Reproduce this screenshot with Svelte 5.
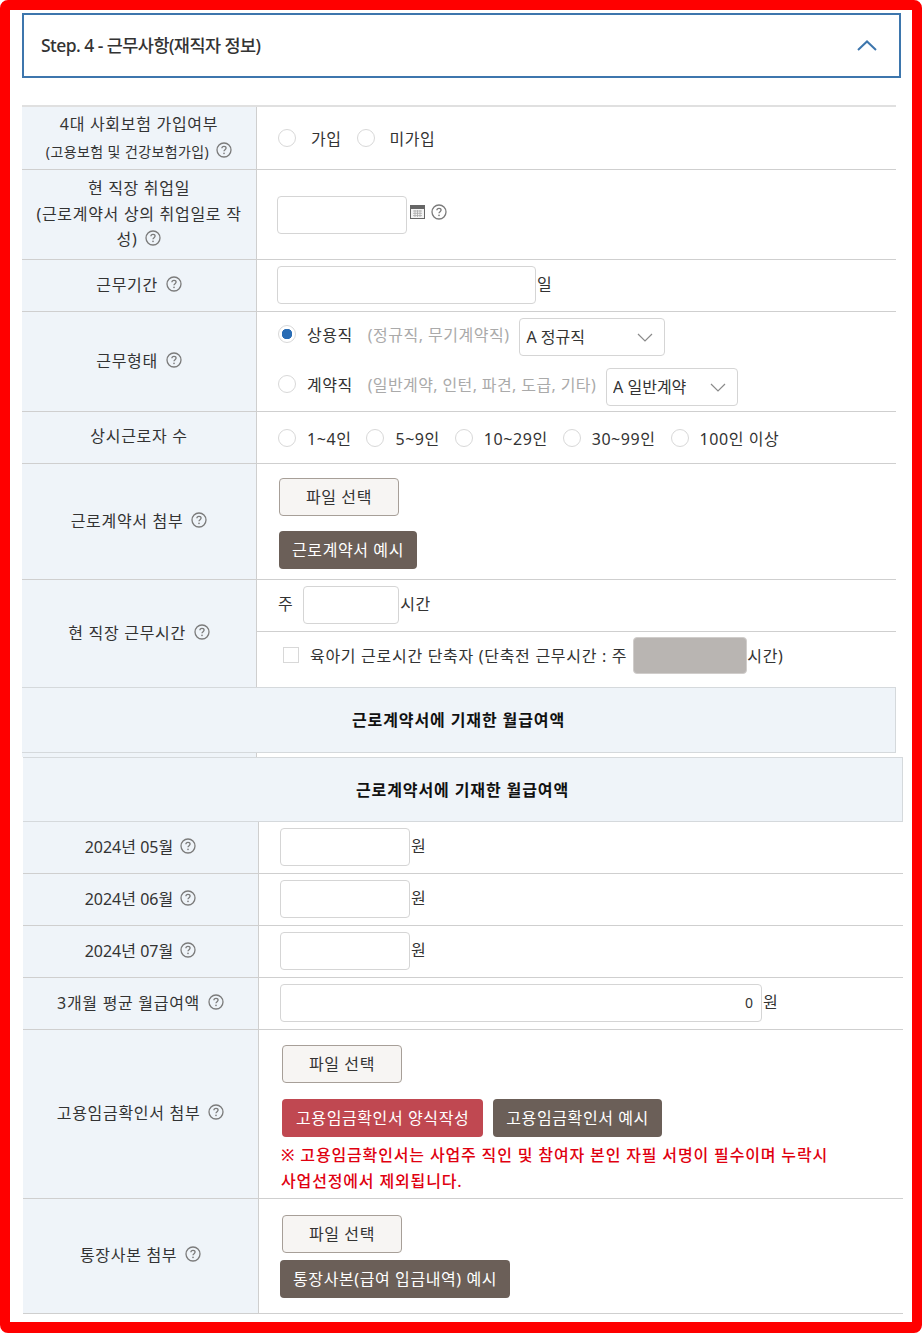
<script>
  const months = ['2024년 05월', '2024년 06월', '2024년 07월'];
  const sizes = ['1~4인', '5~9인', '10~29인', '30~99인', '100인 이상'];
</script>

{#snippet help()}
  <svg class="help" viewBox="0 0 16 16" aria-hidden="true">
    <circle cx="8" cy="8" r="7" fill="none" stroke="#7b7b7b" stroke-width="1.3" />
    <path d="M5.9 6.2c0-1.2 1-1.9 2.1-1.9s2.1.7 2.1 1.8c0 1.5-2.1 1.6-2.1 3.2" fill="none" stroke="#7b7b7b" stroke-width="1.3" />
    <circle cx="8" cy="11.4" r=".8" fill="#7b7b7b" />
  </svg>
{/snippet}

{#snippet chevron()}
  <svg class="select-arrow" viewBox="0 0 16 9" aria-hidden="true">
    <path d="M1 1l7 7 7-7" fill="none" stroke="#8a8a8a" stroke-width="1.2" />
  </svg>
{/snippet}

<div class="frame">
  <div class="step-header">
    <span>Step. 4 - 근무사항(재직자 정보)</span>
    <svg class="collapse" viewBox="0 0 20 11" aria-hidden="true">
      <path d="M1 10l9-8.5 9 8.5" fill="none" stroke="#3d76ad" stroke-width="2" />
    </svg>
  </div>

  <table class="form first">
    <colgroup><col class="col-head" /><col /></colgroup>
    <tbody>
      <tr class="h63">
        <th>
          <div>4대 사회보험 가입여부</div>
          <div class="sub">(고용보험 및 건강보험가입) {@render help()}</div>
        </th>
        <td>
          <div class="radios wide">
            <label><input type="radio" name="ins" /><span>가입</span></label>
            <label><input type="radio" name="ins" /><span>미가입</span></label>
          </div>
        </td>
      </tr>
      <tr class="h90">
        <th>현 직장 취업일<br />(근로계약서 상의 취업일로 작성) {@render help()}</th>
        <td>
          <div class="line top">
            <input class="text w130" type="text" />
            <svg class="calendar" viewBox="0 0 15 15" aria-hidden="true">
              <rect x=".5" y="1.5" width="14" height="13" fill="#f4f4f4" stroke="#666" />
              <rect x=".5" y="1.5" width="14" height="3.5" fill="#666" />
              <path d="M3 7h9M3 9.3h9M3 11.6h9M5 6v7M7.5 6v7M10 6v7" stroke="#aaa" stroke-width=".8" />
            </svg>
            {@render help()}
          </div>
        </td>
      </tr>
      <tr class="h52">
        <th>근무기간 {@render help()}</th>
        <td><div class="line lift"><input class="text w259" type="text" /><span class="unit">일</span></div></td>
      </tr>
      <tr class="h100">
        <th>근무형태 {@render help()}</th>
        <td>
          <div class="employ">
            <div class="employ-row">
              <label class="choice"><input type="radio" name="kind" checked /><span>상용직</span></label>
              <span class="hint">(정규직, 무기계약직)</span>
              <div class="select s146"><select><option>A 정규직</option></select>{@render chevron()}</div>
            </div>
            <div class="employ-row">
              <label class="choice"><input type="radio" name="kind" /><span>계약직</span></label>
              <span class="hint long">(일반계약, 인턴, 파견, 도급, 기타)</span>
              <div class="select s132"><select><option>A 일반계약</option></select>{@render chevron()}</div>
            </div>
          </div>
        </td>
      </tr>
      <tr class="h52">
        <th class="up">상시근로자 수</th>
        <td>
          <div class="radios">
            {#each sizes as size}
              <label><input type="radio" name="size" /><span>{size}</span></label>
            {/each}
          </div>
        </td>
      </tr>
      <tr class="h116">
        <th>근로계약서 첨부 {@render help()}</th>
        <td>
          <div class="stack contract">
            <button class="file w120">파일 선택</button>
            <button class="dark">근로계약서 예시</button>
          </div>
        </td>
      </tr>
      <tr class="h52">
        <th rowspan="2" class="last">현 직장 근무시간 {@render help()}</th>
        <td>
          <div class="line week lift"><span class="ju">주</span><input class="text w96" type="text" /><span class="unit">시간</span></div>
        </td>
      </tr>
      <tr class="h55">
        <td class="last">
          <div class="line shorten">
            <input class="check" type="checkbox" />
            <span class="check-label">육아기 근로시간 단축자 (단축전 근무시간 : 주</span>
            <input class="text disabled" type="text" disabled />
            <span>시간)</span>
          </div>
        </td>
      </tr>
      <tr class="h66">
        <td class="band" colspan="2">근로계약서에 기재한 월급여액</td>
      </tr>
      <tr class="sliver"><th></th><td></td></tr>
    </tbody>
  </table>

  <table class="form second">
    <colgroup><col class="col-head2" /><col /></colgroup>
    <tbody>
      <tr class="h65">
        <td class="band" colspan="2">근로계약서에 기재한 월급여액</td>
      </tr>
      {#each months as month}
        <tr class="h52">
          <th class="tight">{month} {@render help()}</th>
          <td><div class="line lift"><input class="text w130" type="text" /><span class="unit">원</span></div></td>
        </tr>
      {/each}
      <tr class="h52">
        <th>3개월 평균 월급여액 {@render help()}</th>
        <td><div class="line lift"><input class="text w482 number" type="text" value="0" /><span class="unit">원</span></div></td>
      </tr>
      <tr class="h169">
        <th>고용임금확인서 첨부 {@render help()}</th>
        <td>
          <div class="stack wage">
            <button class="file w120">파일 선택</button>
            <div class="btn-row">
              <button class="red">고용임금확인서 양식작성</button>
              <button class="dark">고용임금확인서 예시</button>
            </div>
            <p class="notice">※ 고용임금확인서는 사업주 직인 및 참여자 본인 자필 서명이 필수이며 누락시<br />사업선정에서 제외됩니다.</p>
          </div>
        </td>
      </tr>
      <tr class="h115">
        <th>통장사본 첨부 {@render help()}</th>
        <td>
          <div class="stack bank">
            <button class="file w120">파일 선택</button>
            <button class="dark">통장사본(급여 입금내역) 예시</button>
          </div>
        </td>
      </tr>
    </tbody>
  </table>
</div>

<style>
  :global(body) {
    margin: 0;
    background: #fff;
  }

  .frame {
    box-sizing: border-box;
    width: 922px;
    height: 1333px;
    border: 10px solid #ff0000;
    border-bottom-width: 11px;
    border-radius: 8px;
    padding-top: 3px;
    overflow: hidden;
    font-family: "Noto Sans", "Noto Sans CJK KR", sans-serif;
    font-size: 16px;
    letter-spacing: 0.5px;
    color: #333;
  }

  .step-header {
    box-sizing: border-box;
    display: flex;
    align-items: center;
    justify-content: space-between;
    width: 879px;
    height: 65px;
    margin-left: 12px;
    padding: 0 22px 3px 17px;
    border: 2px solid #3d76ad;
    font-size: 17.5px;
    font-weight: 500;
    letter-spacing: -0.55px;
    color: #333;
  }

  .collapse {
    width: 20px;
    height: 11px;
    margin-top: 3px;
  }

  .form {
    table-layout: fixed;
    border-collapse: separate;
    border-spacing: 0;
  }

  .first {
    width: 874px;
    margin: 27px 0 0 12px;
    border-top: 2px solid #e0e0e0;
  }

  .second {
    width: 880px;
    margin-left: 13px;
  }

  .col-head {
    width: 235px;
  }

  .col-head2 {
    width: 236px;
  }

  th, td {
    box-sizing: border-box;
    padding: 0;
    border-bottom: 1px solid #cfcfcf;
    vertical-align: middle;
  }

  th {
    padding: 0 10px;
    background: #eff4f9;
    border-right: 1px solid #cfcfcf;
    font-weight: 400;
    text-align: center;
    line-height: 25.5px;
    letter-spacing: 0.7px;
    color: #333;
  }

  th.tight {
    letter-spacing: 0;
  }

  td {
    padding-left: 20px;
  }

  .second td {
    padding-left: 21px;
  }

  th.last, td.last {
    border-bottom: 0;
  }

  th.up {
    padding-bottom: 1px;
  }

  .h52 { height: 52px; }
  .h55 { height: 55px; }
  .h63 { height: 63px; }
  .h65 { height: 65px; }
  .h66 { height: 66px; }
  .h90 { height: 90px; }
  .h100 { height: 100px; }
  .h115 { height: 115px; }
  .h116 { height: 116px; }
  .h169 { height: 169px; }

  .sliver {
    height: 4px;
  }

  .sliver th, .sliver td {
    padding: 0;
    border-bottom: 0;
    line-height: 0;
  }

  .sub {
    margin-top: 2px;
    font-size: 14px;
    letter-spacing: 0.4px;
  }

  td.band {
    padding: 0 0 2px;
    background: #eff4f9;
    border: 1px solid #d5d9dc;
    border-left: 0;
    text-align: center;
    font-weight: 700;
    letter-spacing: 0.9px;
    color: #111;
  }

  .help {
    width: 16px;
    height: 16px;
    margin-left: 3px;
    vertical-align: -1px;
  }

  .line {
    display: flex;
    align-items: center;
  }

  .line.lift {
    margin-bottom: 2px;
  }

  .line.top {
    align-items: flex-start;
  }

  .text {
    box-sizing: border-box;
    height: 38px;
    padding: 0 8px;
    border: 1px solid #d5d5d5;
    border-radius: 4px;
    background: #fff;
    font: inherit;
    font-size: 14px;
    color: #333;
  }

  .w96 { width: 96px; }
  .w130 { width: 130px; }
  .w259 { width: 259px; }
  .w482 { width: 482px; }

  .number {
    text-align: right;
  }

  .unit {
    margin: 0 0 4px 1px;
  }

  .calendar {
    width: 15px;
    height: 15px;
    margin: 8px 3px 0 3px;
  }

  .line.top .help {
    margin-top: 8px;
  }

  .radios {
    display: flex;
    gap: 15px;
    padding-left: 1px;
    letter-spacing: 0.56px;
  }

  .radios.wide span {
    margin-left: 15px;
  }

  .radios label, .choice {
    display: flex;
    align-items: center;
  }

  .radios span, .choice span {
    margin-left: 11px;
  }

  input[type="radio"] {
    appearance: none;
    box-sizing: border-box;
    width: 18px;
    height: 18px;
    margin: 0;
    border: 1px solid #d8d8d8;
    border-radius: 50%;
    background: #fff;
  }

  input[type="radio"]:checked {
    background: radial-gradient(circle, #2a6db5 0 5px, #fff 5.5px);
  }

  .employ {
    display: flex;
    flex-direction: column;
    gap: 12px;
    padding-left: 1px;
  }

  .employ-row {
    display: flex;
    align-items: flex-start;
    height: 38px;
  }

  .choice {
    height: 32px;
  }

  .hint {
    margin-left: 15px;
    line-height: 34px;
    color: #aaa;
  }

  .hint.long {
    letter-spacing: 0.38px;
  }

  .select {
    position: relative;
    margin-left: 10px;
  }

  .s146 { width: 146px; }
  .s132 { width: 132px; }

  select {
    appearance: none;
    box-sizing: border-box;
    display: block;
    width: 100%;
    height: 38px;
    padding: 0 6px;
    border: 1px solid #d5d5d5;
    border-radius: 4px;
    background: #fff;
    font: inherit;
    color: #333;
  }

  .select-arrow {
    position: absolute;
    top: 15px;
    right: 12px;
    width: 16px;
    height: 9px;
  }

  .stack {
    display: flex;
    flex-direction: column;
    align-items: flex-start;
  }

  button {
    box-sizing: border-box;
    height: 38px;
    padding: 0 13px 2px;
    border-radius: 4px;
    font: inherit;
    letter-spacing: 0.6px;
    white-space: nowrap;
  }

  .file {
    border: 1px solid #a79f98;
    background: #f7f5f3;
    color: #333;
  }

  .w120 {
    width: 120px;
  }

  .dark {
    border: 0;
    background: #6b5f58;
    color: #fff;
  }

  .red {
    padding: 0 14px 2px;
    border: 0;
    background: #c04851;
    color: #fff;
  }

  .contract {
    gap: 15px;
    margin: 4px 0 0 2px;
  }

  .week .ju {
    margin: 0 10px 4px 1px;
  }

  .shorten {
    padding: 0 0 9px 6px;
    letter-spacing: 0.7px;
  }

  .check {
    appearance: none;
    box-sizing: border-box;
    width: 16px;
    height: 16px;
    margin: 0;
    border: 1px solid #d8d8d8;
    background: #fff;
  }

  .check-label {
    margin: 0 6px 0 11px;
  }

  .disabled {
    width: 114px;
    height: 37px;
    background: #b9b5b2;
    border-color: #d0cdcb;
  }

  .wage {
    margin: 11px 0 0 2px;
    gap: 16px;
  }

  .btn-row {
    display: flex;
    gap: 10px;
  }

  .notice {
    margin: -11px 0 0 -1px;
    font-weight: 500;
    line-height: 26px;
    letter-spacing: 0.85px;
    color: #e0000f;
  }

  .bank {
    gap: 7px;
    margin: 0 0 0 2px;
  }

  .bank .dark {
    margin-left: -2px;
  }
</style>
